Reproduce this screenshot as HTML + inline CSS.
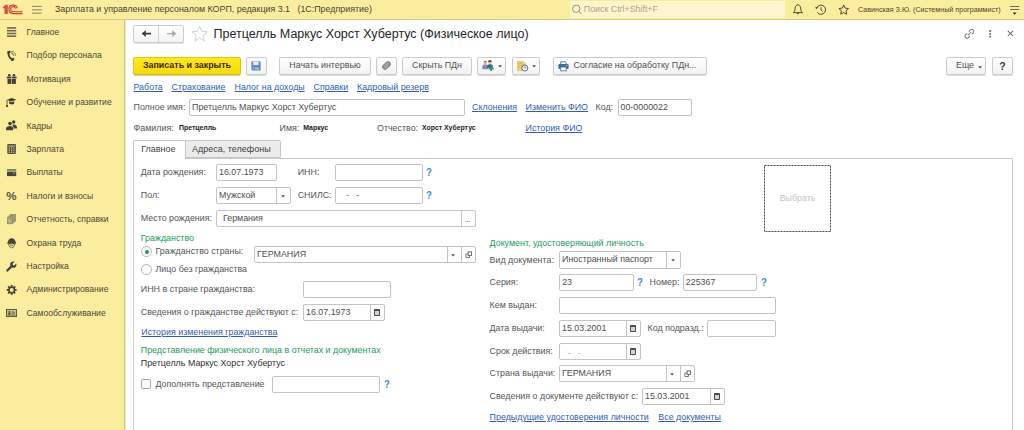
<!DOCTYPE html>
<html lang="ru">
<head>
<meta charset="utf-8">
<title>Претцелль Маркус Хорст Хубертус (Физическое лицо)</title>
<style>
*{box-sizing:border-box;margin:0;padding:0}
html,body{width:1024px;height:430px;overflow:hidden;background:#fff}
body{font-family:"Liberation Sans",sans-serif;font-size:8.9px;color:#3c3c3c;position:relative}
.a{position:absolute;white-space:pre;line-height:12px}
#top{position:absolute;left:0;top:0;width:1024px;height:20px;background:#fbed9e;border-bottom:1px solid #d9cb7c}
#side{position:absolute;left:0;top:20px;width:125px;height:410px;background:#fbed9e;border-right:1px solid #d5c777;box-shadow:1px 0 0 rgba(200,190,130,.3)}
.nav{position:absolute;left:26.5px;font-size:8.6px;color:#4b493c;white-space:pre;line-height:12px}
.ico{position:absolute;left:6px;width:12px;height:12px}
.t{color:#3f3f3f}
.lbl{color:#565656}
.in{position:absolute;height:17px;border:1px solid #c4c4c4;border-radius:2px;background:#fff}
.in span{position:absolute;left:2px;top:1px;line-height:12px;white-space:pre;color:#505050}
.dv{position:absolute;top:0;bottom:0;width:1px;background:#c4c4c4}
.btn{position:absolute;top:57px;height:17.5px;border:1px solid #cccccc;border-radius:2px;background:linear-gradient(#ffffff,#f2f2f2);box-shadow:0 1px 0 rgba(0,0,0,.13);white-space:pre;line-height:15px;text-align:center;color:#525252}
.lnk{position:absolute;color:#2f5fb5;text-decoration:underline;white-space:pre;line-height:12px}
.grn{position:absolute;color:#18a05e;white-space:pre;line-height:12px}
.q{position:absolute;color:#3a8fd6;font-weight:700;font-size:10.4px;line-height:12px;transform:scaleX(.92);transform-origin:0 0}
.arr{position:absolute;width:0;height:0;border-left:1.8px solid transparent;border-right:1.8px solid transparent;border-top:2.3px solid #4d4d4d}
.b7{font-weight:700;font-size:6.9px;color:#222}
.rad{position:absolute;width:11px;height:11px;border:1px solid #b4b4b4;border-radius:50%;background:#fff}
.rad i{position:absolute;left:2.5px;top:2.5px;width:4px;height:4px;border-radius:50%;background:#1b9c52}
.chk{position:absolute;width:10px;height:10px;border:1px solid #a6a6a6;border-radius:2px;background:#fff}
.dots{position:absolute;top:2.5px;font-weight:700;font-size:6.5px;line-height:12px;color:#8a8a8a;letter-spacing:0}
.cal{position:absolute;top:4.5px;width:6px;height:6.5px;background:#d4d4d4;border:1px solid #4a4a4a;border-top-width:2px;border-radius:1px}
</style>
</head>
<body>
<!-- TOP BAR -->
<div id="top">
  <svg class="a" style="left:0;top:0" width="26" height="19" viewBox="0 0 26 19">
    <path d="M3 7.1L5.4 4.8H7.8V14H4.5V8.1L3 8.6Z" fill="#e04a3a"/>
    <g fill="none" stroke="#dc3a30">
      <path d="M17.3 8.4A4.2 4.2 0 1 0 13.2 13.5H22.6" stroke-width="1.25"/>
      <path d="M15.6 8.5A2.5 2.5 0 1 0 13.2 11.7H22.6" stroke-width="1.1"/>
    </g>
  </svg>
  <svg class="a" style="left:32px;top:5px" width="11" height="10" viewBox="0 0 11 10"><path d="M0 1.4H9.7M0 4.8H9.7M0 8.2H9.7" stroke="#8c845e" stroke-width="1"/></svg>
  <div class="a" id="apptitle" style="left:55px;top:3px;font-size:8.9px;color:#4a4530">Зарплата и управление персоналом КОРП, редакция 3.1   (1С:Предприятие)</div>
  <div class="a" style="left:570px;top:1px;width:214.5px;height:16.5px;background:#fdf6cd"></div>
  <svg class="a" style="left:571px;top:3px" width="12" height="12" viewBox="0 0 12 12"><circle cx="5.2" cy="5.7" r="3.7" fill="none" stroke="#8f8a6e" stroke-width=".9"/><path d="M7.9 8.4L10.4 11" stroke="#8f8a6e" stroke-width="1"/></svg>
  <div class="a" id="srch" style="left:583.8px;top:3.1px;font-size:8.85px;color:#aaa48a">Поиск Ctrl+Shift+F</div>
  <!-- bell -->
  <svg class="a" style="left:792px;top:4px" width="12" height="12" viewBox="0 0 12 12"><path d="M5.9 .9C4.4 .9 3.4 2 3.2 3.8L2.8 6.6C2.7 7.4 2 8 1.3 8.6H10.5C9.8 8 9.1 7.4 9 6.6L8.6 3.8C8.4 2 7.4 .9 5.9 .9Z" fill="none" stroke="#3d3a2c" stroke-width=".9" stroke-linejoin="round"/><path d="M4.5 9.2A1.5 1.5 0 0 0 7.3 9.2Z" fill="#3d3a2c"/></svg>
  <!-- history -->
  <svg class="a" style="left:815px;top:4px" width="12" height="12" viewBox="0 0 12 12"><path d="M1.6 4.3A4.6 4.6 0 1 1 2.3 8.5" fill="none" stroke="#3d3a2c" stroke-width=".9"/><path d="M.4 3L2.7 3.5L1.1 5.3Z" fill="#3d3a2c"/><path d="M6 3.3V6L7.7 7.6" fill="none" stroke="#3d3a2c" stroke-width=".9"/></svg>
  <!-- star -->
  <svg class="a" style="left:838px;top:4px" width="12" height="12" viewBox="0 0 12 12"><path d="M5.7 1L7.1 4.1L10.5 4.5L8 6.8L8.7 10.2L5.7 8.5L2.7 10.2L3.4 6.8L0.9 4.5L4.3 4.1Z" fill="none" stroke="#3d3a2c" stroke-width=".9" stroke-linejoin="round"/></svg>
  <div class="a" id="usr" style="left:858px;top:3.5px;font-size:7.15px;color:#4a4530">Савинская З.Ю. (Системный программист)</div>
  <svg class="a" style="left:1009px;top:5px" width="12" height="11" viewBox="0 0 12 11"><path d="M1 1.5H10.3M1 4.5H10.3" stroke="#716c4c" stroke-width="1"/><path d="M3.6 7.5H7.6L5.6 9.9Z" fill="#3b3a2e"/></svg>
</div>

<!-- SIDEBAR -->
<div id="side">
  <div class="nav" style="top:6.0px">Главное</div>
  <div class="nav" style="top:29.4px">Подбор персонала</div>
  <div class="nav" style="top:52.8px">Мотивация</div>
  <div class="nav" style="top:76.2px">Обучение и развитие</div>
  <div class="nav" style="top:99.6px">Кадры</div>
  <div class="nav" style="top:123.0px">Зарплата</div>
  <div class="nav" style="top:146.4px">Выплаты</div>
  <div class="nav" style="top:169.8px">Налоги и взносы</div>
  <div class="nav" style="top:193.2px">Отчетность, справки</div>
  <div class="nav" style="top:216.6px">Охрана труда</div>
  <div class="nav" style="top:240.0px">Настройка</div>
  <div class="nav" style="top:263.4px">Администрирование</div>
  <div class="nav" style="top:286.8px">Самообслуживание</div>
</div>

<svg style="position:absolute;left:0;top:0" width="24" height="330" viewBox="0 0 24 330">
  <!-- main -->
  <g fill="#6e6951"><rect x="7" y="27.1" width="9.2" height="1.6"/><rect x="7" y="29.9" width="9.2" height="1.6"/><rect x="7" y="32.7" width="9.2" height="1.6"/><rect x="7" y="35.4" width="9.2" height="1.6"/></g>
  <!-- phone -->
  <g fill="none" stroke="#3f3e3a" stroke-linecap="round"><path d="M8.6 52.6C8.2 55.6 10 58.6 12.6 59.7" stroke-width="2"/><path d="M8.2 52.2L9.6 51.8M12.2 60L13.3 59" stroke-width="2.2"/><path d="M11.2 52.8A2.6 2.6 0 0 1 13.5 55.4" stroke-width=".8"/><path d="M11.6 51.2A4.2 4.2 0 0 1 15.4 55.6" stroke-width=".8" stroke="#6e6951"/></g>
  <!-- gift -->
  <g fill="#403f3c"><rect x="6.8" y="76.6" width="4.6" height="1.8"/><rect x="12" y="76.6" width="4.6" height="1.8"/><rect x="7.5" y="78.9" width="3.9" height="5"/><rect x="12" y="78.9" width="3.9" height="5"/><circle cx="9.3" cy="75.3" r="1.3"/><circle cx="14" cy="75.3" r="1.3"/></g>
  <!-- grad cap -->
  <g fill="#403f3c"><path d="M6.6 100L11.5 97.9L16.5 99.7L11.5 101.6Z"/><path d="M9.2 101.3L11.5 102.2L14.2 101.2V103.6C13.4 104.8 10 104.8 9.2 103.6Z"/><rect x="6.6" y="100" width=".8" height="5.6"/><circle cx="7" cy="106.1" r="1.1"/></g>
  <!-- people -->
  <g fill="#403f3c"><circle cx="13.7" cy="122" r="1.7"/><path d="M13.4 124.6C15.6 124.6 17 126 17 127.6V128.6H13.8C13.8 127 13 125.6 12 125Z"/><circle cx="10" cy="123.6" r="1.8"/><path d="M6.1 130.2V128.6C6.1 127 7.8 125.9 10 125.9S13.2 127 13.2 128.6V130.2Z"/></g>
  <!-- calculator -->
  <rect x="7.3" y="144.1" width="8.6" height="9.8" rx=".8" fill="#514e42"/>
  <g fill="#e9dc95"><rect x="8.4" y="145.6" width="6.4" height=".9"/><rect x="8.7" y="147.6" width="1.2" height="1.1"/><rect x="11" y="147.6" width="1.2" height="1.1"/><rect x="13.3" y="147.6" width="1.2" height="1.1"/><rect x="8.7" y="149.7" width="1.2" height="1.1"/><rect x="11" y="149.7" width="1.2" height="1.1"/><rect x="13.3" y="149.7" width="1.2" height="1.1"/><rect x="8.7" y="151.7" width="1.2" height="1.1"/><rect x="11" y="151.7" width="1.2" height="1.1"/><rect x="13.3" y="151.7" width="1.2" height="1.1"/></g>
  <!-- card -->
  <rect x="7" y="169.1" width="9.2" height="1.7" fill="#7a7458"/><rect x="7" y="171.6" width="9.2" height="4.5" fill="#45433f"/><rect x="13.2" y="172.5" width="1.7" height="1.3" fill="#9b9474"/>
  <!-- reports -->
  <g fill="#a9a17a" stroke="#8c8566" stroke-width=".7"><rect x="10.3" y="214.6" width="5.3" height="6.6"/><rect x="8.8" y="215.9" width="5.3" height="6.6"/><rect x="7.4" y="217.2" width="5.3" height="6.6"/></g><path d="M9 219.2V221.6H11" fill="none" stroke="#d9cd8e" stroke-width=".7"/>
  <!-- helmet -->
  <g><path d="M7.6 243.2C7.6 240.4 9.4 238.3 11.7 238.3S15.8 240.4 15.8 243.2Z" fill="#44433f"/><rect x="7.3" y="242.6" width="8.8" height="1.1" fill="#44433f"/><path d="M8.6 243.8C8.6 246.2 10 247.8 11.7 247.8S14.8 246.2 14.8 243.8Z" fill="none" stroke="#5a574a" stroke-width=".9"/><path d="M10.2 245.6H13.2" stroke="#5a574a" stroke-width=".8"/></g>
  <!-- wrench -->
  <path d="M7.3 270.5L12.2 265.6" stroke="#42413d" stroke-width="2.3" stroke-linecap="round" fill="none"/><circle cx="13.3" cy="264.7" r="3.1" fill="#42413d"/><path d="M13.1 264.9L16.6 261.4" stroke="#fbed9e" stroke-width="2.3" fill="none"/>
  <!-- gear -->
  <g fill="#45433c"><rect x="10.75" y="285.00" width="1.9" height="2.2" transform="rotate(0 11.7 289.9)"/><rect x="10.75" y="285.00" width="1.9" height="2.2" transform="rotate(45 11.7 289.9)"/><rect x="10.75" y="285.00" width="1.9" height="2.2" transform="rotate(90 11.7 289.9)"/><rect x="10.75" y="285.00" width="1.9" height="2.2" transform="rotate(135 11.7 289.9)"/><rect x="10.75" y="285.00" width="1.9" height="2.2" transform="rotate(180 11.7 289.9)"/><rect x="10.75" y="285.00" width="1.9" height="2.2" transform="rotate(225 11.7 289.9)"/><rect x="10.75" y="285.00" width="1.9" height="2.2" transform="rotate(270 11.7 289.9)"/><rect x="10.75" y="285.00" width="1.9" height="2.2" transform="rotate(315 11.7 289.9)"/></g><circle cx="11.7" cy="289.9" r="2.75" fill="none" stroke="#45433c" stroke-width="1.5"/>
  <!-- self service -->
  <rect x="6.5" y="309.4" width="10" height="7.2" fill="#c9be86" stroke="#4f4c42" stroke-width=".9"/><circle cx="9.4" cy="311.8" r=".9" fill="#4f4c42"/><path d="M8.1 314.7V313.9A1.3 1.3 0 0 1 10.7 313.9V314.7Z" fill="#4f4c42"/><path d="M11.8 311.3H13.8L14.8 312.3V314.7H11.8Z" fill="#8e8768"/><path d="M7.5 315.5H15.5" stroke="#6a6654" stroke-width=".5"/>
</svg>
<div class="a" style="left:6.3px;top:189.3px;font-size:11.6px;font-weight:700;line-height:14px;color:#55523f">%</div>

<!-- MAIN -->
<div id="main">
  <!-- nav arrows -->
  <div class="a" style="left:133px;top:25px;width:51px;height:17.5px;border:1px solid #cdcdcd;border-radius:2px;background:linear-gradient(#fff,#f3f3f3);box-shadow:0 1px 0 rgba(0,0,0,.1)"></div>
  <div class="a" style="left:158px;top:26px;width:1px;height:15.5px;background:#d2d2d2"></div>
  <svg class="a" style="left:140px;top:28px" width="14" height="12" viewBox="0 0 14 12"><path d="M1.6 5.6L5.8 2.2V4.8H11V6.4H5.8V9Z" fill="#3d3d3d"/></svg>
  <svg class="a" style="left:164px;top:28px" width="14" height="12" viewBox="0 0 14 12"><path d="M12.4 5.6L8.2 2.2V4.9H3V6.3H8.2V9Z" fill="#a9a9a9"/></svg>
  <svg class="a" style="left:191px;top:25.2px" width="18" height="18" viewBox="0 0 16 16"><path d="M7.7 1.2L9.6 5.6L14.4 6.1L10.8 9.3L11.8 14L7.7 11.6L3.6 14L4.6 9.3L1 6.1L5.8 5.6Z" fill="none" stroke="#c6c9cf" stroke-width=".8" stroke-linejoin="round"/></svg>
  <div class="a" id="ttl" style="left:213.5px;top:25px;font-size:12.5px;line-height:18px;color:#262626">Претцелль Маркус Хорст Хубертус (Физическое лицо)</div>
  <!-- right icons -->
  <svg class="a" style="left:962px;top:27px" width="15" height="14" viewBox="0 0 15 14"><g transform="translate(7.4 6.8) rotate(-45)" fill="none" stroke="#767676" stroke-width="1"><path d="M-1.2 -2H-3.4A2 2 0 0 0 -3.4 2H-1.2"/><path d="M1.2 -2H3.4A2 2 0 0 1 3.4 2H1.2"/><path d="M-2.2 0H2.2"/></g></svg>
  <svg class="a" style="left:988px;top:29px" width="5" height="10" viewBox="0 0 5 10"><g fill="#6a6a6a"><rect x="1.3" y="1.1" width="1.8" height="1.8" rx=".4"/><rect x="1.3" y="4" width="1.8" height="1.8" rx=".4"/><rect x="1.3" y="6.8" width="1.8" height="1.8" rx=".4"/></g></svg>
  <svg class="a" style="left:1006.5px;top:30.3px" width="7" height="7" viewBox="0 0 7 7"><path d="M.8 .8L6 6M6 .8L.8 6" stroke="#666" stroke-width="1.05"/></svg>

  <!-- toolbar -->
  <div class="btn" id="b1" style="left:133px;width:108px;background:linear-gradient(#ffe81c,#f8da0a);border-color:#e6ca00 #e2c400 #d4b600;box-shadow:0 1px 0 rgba(150,130,0,.3);color:#2f2c10;font-weight:700;font-size:8.9px">Записать и закрыть</div>
  <div class="btn" style="left:246px;width:21px"></div>
  <div class="btn" id="b2" style="left:279px;width:92px">Начать интервью</div>
  <div class="btn" style="left:376px;width:21px"></div>
  <div class="btn" id="b3" style="left:402px;width:70px">Скрыть ПДн</div>
  <div class="btn" style="left:477px;width:29px"></div>
  <div class="btn" style="left:512px;width:28px"></div>
  <div class="btn" id="b4" style="left:553px;width:154px;text-align:left;padding-left:19.5px">Согласие на обработку ПДн...</div>
  <div class="btn" id="b5" style="left:946px;width:40px;text-align:left;padding-left:9px">Еще</div>
  <svg class="a" style="left:978.4px;top:65.6px" width="5" height="4" viewBox="0 0 5 4"><path d="M.3 .3H3.9L2.1 2.5Z" fill="#4a4a4a"/></svg>
  <div class="btn" style="left:992px;width:21px;font-weight:700;font-size:10.5px;line-height:16.5px;color:#3a3a3a">?</div>
  <svg class="a" style="left:497.5px;top:65.0px" width="5" height="4" viewBox="0 0 5 4"><path d="M.3 .3H3.9L2.1 2.5Z" fill="#4a4a4a"/></svg>
  <svg class="a" style="left:531.8px;top:65.0px" width="5" height="4" viewBox="0 0 5 4"><path d="M.3 .3H3.9L2.1 2.5Z" fill="#4a4a4a"/></svg>


  <!-- toolbar icons -->
  <svg class="a" style="left:251.2px;top:60.6px" width="10" height="10" viewBox="0 0 10 10"><path d="M.4 .4H9.6V9.6H1.4L.4 8.6Z" fill="#5b87c8"/><rect x="2.2" y=".9" width="5.4" height="3.2" fill="#e9eff8"/><rect x="1.9" y="6.2" width="6" height="3" fill="#a9b6c6"/><rect x="2.8" y="6.8" width="1.4" height="2.2" fill="#5b87c8"/></svg>
  <svg class="a" style="left:381px;top:60px" width="11" height="11" viewBox="0 0 11 11"><g transform="rotate(-42 5.5 5.5)"><rect x=".6" y="2.6" width="9.8" height="5.8" rx="2.9" fill="#8d8d8d"/><path d="M3 4.6H8.4M3 6.4H7.2" stroke="#c9c9c9" stroke-width=".7"/></g></svg>
  <svg class="a" style="left:481.5px;top:60px" width="12" height="11" viewBox="0 0 12 11">
    <circle cx="3.2" cy="2.6" r="1.7" fill="#e9b98a"/><path d="M1.6 2.2A1.7 1.7 0 0 1 4.8 2.2Z" fill="#8c5a2e"/>
    <path d="M.3 9.3V6.3A2 2 0 0 1 2.3 4.6H4.2A2 2 0 0 1 6 6.3V9.3Z" fill="#6f93be"/><path d="M2.7 4.8H3.9L3.6 9H3Z" fill="#d87c7c"/>
    <circle cx="7.9" cy="2.2" r="1.8" fill="#e9b98a"/><path d="M6.1 1.9A1.8 1.8 0 0 1 9.7 1.9Z" fill="#3d4a78"/>
    <path d="M5.2 8V5.8A2 2 0 0 1 7 4.3H9A2 2 0 0 1 10.8 5.8V8Z" fill="#4a5a8c"/>
    <path d="M8.3 6.2H10V7.9H11.7V9.5H10V10.9H8.3V9.5H6.6V7.9H8.3Z" fill="#1aa64b"/>
  </svg>
  <svg class="a" style="left:517px;top:60.5px" width="12" height="11" viewBox="0 0 12 11">
    <path d="M.3 .3H6.2L8.6 2.7V9.6H.3Z" fill="#f0d068" stroke="#d9b23c" stroke-width=".5"/><path d="M1.6 2.3H5M1.6 4H6.5M1.6 5.7H4.5" stroke="#d2a93a" stroke-width=".6"/>
    <circle cx="7.8" cy="7" r="3" fill="#f4f6fb" stroke="#4a6fb5" stroke-width="1"/><path d="M7.8 5.2V7H9.2" fill="none" stroke="#c0392b" stroke-width=".7"/>
  </svg>
  <svg class="a" style="left:558px;top:60.5px" width="11" height="11" viewBox="0 0 11 11"><path d="M2.8 3V.8H7.2L8.2 1.8V3" fill="#fff" stroke="#3f6d9b" stroke-width=".9"/><rect x=".4" y="3" width="10.2" height="5" rx="1.2" fill="#3f6d9b"/><rect x="2.8" y="6" width="5.4" height="3.9" fill="#fff" stroke="#3f6d9b" stroke-width=".8"/><rect x="8" y="4" width="1.3" height=".8" fill="#cfe0f0"/></svg>

  <!-- links -->
  <div class="lnk" style="left:133.5px;top:80.5px">Работа</div>
  <div class="lnk" style="left:171.5px;top:80.5px">Страхование</div>
  <div class="lnk" style="left:234.5px;top:80.5px">Налог на доходы</div>
  <div class="lnk" style="left:313.5px;top:80.5px">Справки</div>
  <div class="lnk" style="left:357px;top:80.5px">Кадровый резерв</div>

  <!-- full name row -->
  <div class="a lbl" id="l1" style="left:133.5px;top:100.5px">Полное имя:</div>
  <div class="in" style="left:189px;top:99px;width:276px"><span>Претцелль Маркус Хорст Хубертус</span></div>
  <div class="lnk" style="left:472px;top:100.5px">Склонения</div>
  <div class="lnk" style="left:525.5px;top:100.5px">Изменить ФИО</div>
  <div class="a lbl" style="left:595.5px;top:100.5px">Код:</div>
  <div class="in" style="left:617.5px;top:99px;width:74.5px"><span>00-0000022</span></div>

  <div class="a lbl" style="left:133.5px;top:121.6px">Фамилия:</div>
  <div class="a b7" style="left:179px;top:122px">Претцелль</div>
  <div class="a lbl" style="left:279.5px;top:121.6px">Имя:</div>
  <div class="a b7" style="left:303.3px;top:122px">Маркус</div>
  <div class="a lbl" style="left:377px;top:121.6px">Отчество:</div>
  <div class="a b7" style="left:422px;top:122px">Хорст Хубертус</div>
  <div class="lnk" style="left:525.5px;top:121.6px">История ФИО</div>
  <!-- tabs -->
  <div class="a" style="left:133px;top:157.5px;width:880px;height:280px;border:1px solid #cecece;border-top-color:#c8c8c8;border-bottom:0"></div>
  <div class="a" style="left:133px;top:140px;width:52.5px;height:18.5px;border:1px solid #c6c6c6;border-bottom:0;background:#fff;border-radius:2px 2px 0 0"></div>
  <div class="a" style="left:184.5px;top:140px;width:96px;height:18px;border:1px solid #c6c6c6;background:#ebebeb;border-radius:0 2px 0 0"></div>
  <div class="a t" id="tab1" style="left:141.2px;top:142.5px;font-size:9px">Главное</div>
  <div class="a t" id="tab2" style="left:192px;top:142.5px;font-size:9px">Адреса, телефоны</div>

  <!-- left column -->
  <div class="a lbl" id="f1" style="left:140.8px;top:166px">Дата рождения:</div>
  <div class="in" style="left:216px;top:164px;width:61px"><span>16.07.1973</span></div>
  <div class="a lbl" style="left:297.7px;top:166px">ИНН:</div>
  <div class="in" style="left:335px;top:164px;width:88px"></div>
  <div class="q" style="left:426.3px;top:166.5px">?</div>

  <div class="a lbl" style="left:140.8px;top:189px">Пол:</div>
  <div class="in" style="left:216px;top:187px;width:75px"><span>Мужской</span><i class="dv" style="left:59px"></i></div>
  <svg class="a" style="left:280.6px;top:194.8px" width="5" height="4" viewBox="0 0 5 4"><path d="M.3 .3H3.9L2.1 2.5Z" fill="#4a4a4a"/></svg>
  <div class="a lbl" style="left:297.7px;top:189px">СНИЛС:</div>
  <div class="in" style="left:335px;top:187px;width:88px"><span style="left:10px;color:#666">-   -</span></div>
  <div class="q" style="left:426.3px;top:189.5px">?</div>

  <div class="a lbl" id="f3" style="left:140.8px;top:212px">Место рождения:</div>
  <div class="in" style="left:216px;top:210px;width:260px"><span style="left:6px">Германия</span><i class="dv" style="left:244px"></i><b class="dots" style="left:248px">...</b></div>

  <div class="grn" id="g1" style="left:140.8px;top:231.5px">Гражданство</div>
  <div class="rad" style="left:141px;top:246.4px"><i></i></div>
  <div class="a lbl" id="f4" style="left:155.5px;top:245.3px">Гражданство страны:</div>
  <div class="in" style="left:254px;top:246px;width:222px"><span>ГЕРМАНИЯ</span><i class="dv" style="left:192px"></i><i class="dv" style="left:206px"></i></div>
  <svg class="a" style="left:451.2px;top:253.6px" width="5" height="4" viewBox="0 0 5 4"><path d="M.3 .3H3.9L2.1 2.5Z" fill="#4a4a4a"/></svg>
  <svg class="a" style="left:465px;top:250.6px" width="8" height="8" viewBox="0 0 8 8"><g fill="none" stroke="#5a5a5a"><rect x="3.1" y=".9" width="3.5" height="3.5" stroke-width=".9"/><path d="M2.9 2.9H.9V6.5H4.5V4.6" stroke-width=".8"/></g></svg>
  <div class="rad" style="left:141px;top:263.6px"></div>
  <div class="a lbl" id="f5" style="left:155.5px;top:262.6px">Лицо без гражданства</div>

  <div class="a lbl" id="f6" style="left:140.8px;top:283px">ИНН в стране гражданства:</div>
  <div class="in" style="left:303px;top:281px;width:88px"></div>
  <div class="a lbl" id="f7" style="left:140.8px;top:306px">Сведения о гражданстве действуют с:</div>
  <div class="in" style="left:303px;top:303.8px;width:82px"><span>16.07.1973</span><i class="dv" style="left:66px"></i><b class="cal" style="left:70px"></b></div>
  <div class="lnk" id="k1" style="left:141.3px;top:326px">История изменения гражданства</div>
  <div class="grn" id="g2" style="left:140.8px;top:343.7px">Представление физического лица в отчетах и документах</div>
  <div class="a" id="f8" style="left:140.8px;top:357px;color:#333">Претцелль Маркус Хорст Хубертус</div>
  <div class="chk" style="left:141.3px;top:379.4px"></div>
  <div class="a lbl" id="f9" style="left:155.5px;top:378px">Дополнять представление</div>
  <div class="in" style="left:272.3px;top:376px;width:108px"></div>
  <div class="q" style="left:383.6px;top:378.5px">?</div>

  <!-- photo -->
  <svg class="a" style="left:764px;top:165px" width="67" height="67" viewBox="0 0 67 67"><rect x=".5" y=".5" width="66" height="66" fill="#fff" stroke="#4f4f4f" stroke-width="1" stroke-dasharray="2.1 .9"/></svg>
  <div class="a" id="ph" style="left:779.7px;top:192px;color:#c4c4c4">Выбрать</div>

  <!-- right column -->
  <div class="grn" id="g3" style="left:489.6px;top:236.7px">Документ, удостоверяющий личность</div>
  <div class="a lbl" id="r1" style="left:489.6px;top:253.5px">Вид документа:</div>
  <div class="in" style="left:559px;top:251px;width:122px;height:17.6px"><span>Иностранный паспорт</span><i class="dv" style="left:106px"></i></div>
  <svg class="a" style="left:670.5px;top:259.1px" width="5" height="4" viewBox="0 0 5 4"><path d="M.3 .3H3.9L2.1 2.5Z" fill="#4a4a4a"/></svg>

  <div class="a lbl" style="left:489.6px;top:276px">Серия:</div>
  <div class="in" style="left:559.2px;top:274px;width:75px"><span>23</span></div>
  <div class="q" style="left:637px;top:276.5px">?</div>
  <div class="a lbl" style="left:649.6px;top:276px">Номер:</div>
  <div class="in" style="left:682.8px;top:274px;width:74.5px"><span>225367</span></div>
  <div class="q" style="left:760.8px;top:276.5px">?</div>

  <div class="a lbl" style="left:489.6px;top:298.6px">Кем выдан:</div>
  <div class="in" style="left:559.2px;top:296.8px;width:216.5px"></div>

  <div class="a lbl" style="left:489.6px;top:321.7px">Дата выдачи:</div>
  <div class="in" style="left:559px;top:319.5px;width:82px"><span>15.03.2001</span><i class="dv" style="left:66px"></i><b class="cal" style="left:70px"></b></div>
  <div class="a lbl" id="r4" style="left:647.6px;top:321.7px">Код подразд.:</div>
  <div class="in" style="left:707.4px;top:319.5px;width:68.3px"></div>

  <div class="a lbl" id="r5" style="left:489.6px;top:344.5px">Срок действия:</div>
  <div class="in" style="left:559px;top:342.6px;width:82px"><span style="left:8px;color:#777">.   .</span><i class="dv" style="left:66px"></i><b class="cal" style="left:70px"></b></div>

  <div class="a lbl" id="r6" style="left:489.6px;top:367.3px">Страна выдачи:</div>
  <div class="in" style="left:559px;top:365px;width:136px"><span>ГЕРМАНИЯ</span><i class="dv" style="left:106px"></i><i class="dv" style="left:120px"></i></div>
  <svg class="a" style="left:670.4px;top:372.6px" width="5" height="4" viewBox="0 0 5 4"><path d="M.3 .3H3.9L2.1 2.5Z" fill="#4a4a4a"/></svg>
  <svg class="a" style="left:684.2px;top:369.6px" width="8" height="8" viewBox="0 0 8 8"><g fill="none" stroke="#5a5a5a"><rect x="3.1" y=".9" width="3.5" height="3.5" stroke-width=".9"/><path d="M2.9 2.9H.9V6.5H4.5V4.6" stroke-width=".8"/></g></svg>

  <div class="a lbl" id="r7" style="left:489.6px;top:389.7px">Сведения о документе действуют с:</div>
  <div class="in" style="left:642px;top:387.8px;width:83px"><span>15.03.2001</span><i class="dv" style="left:67px"></i><b class="cal" style="left:71px"></b></div>
  <div class="lnk" id="k2" style="left:489.6px;top:411px">Предыдущие удостоверения личности</div>
  <div class="lnk" id="k3" style="left:658.3px;top:411px">Все документы</div>
</div>
</body>
</html>
